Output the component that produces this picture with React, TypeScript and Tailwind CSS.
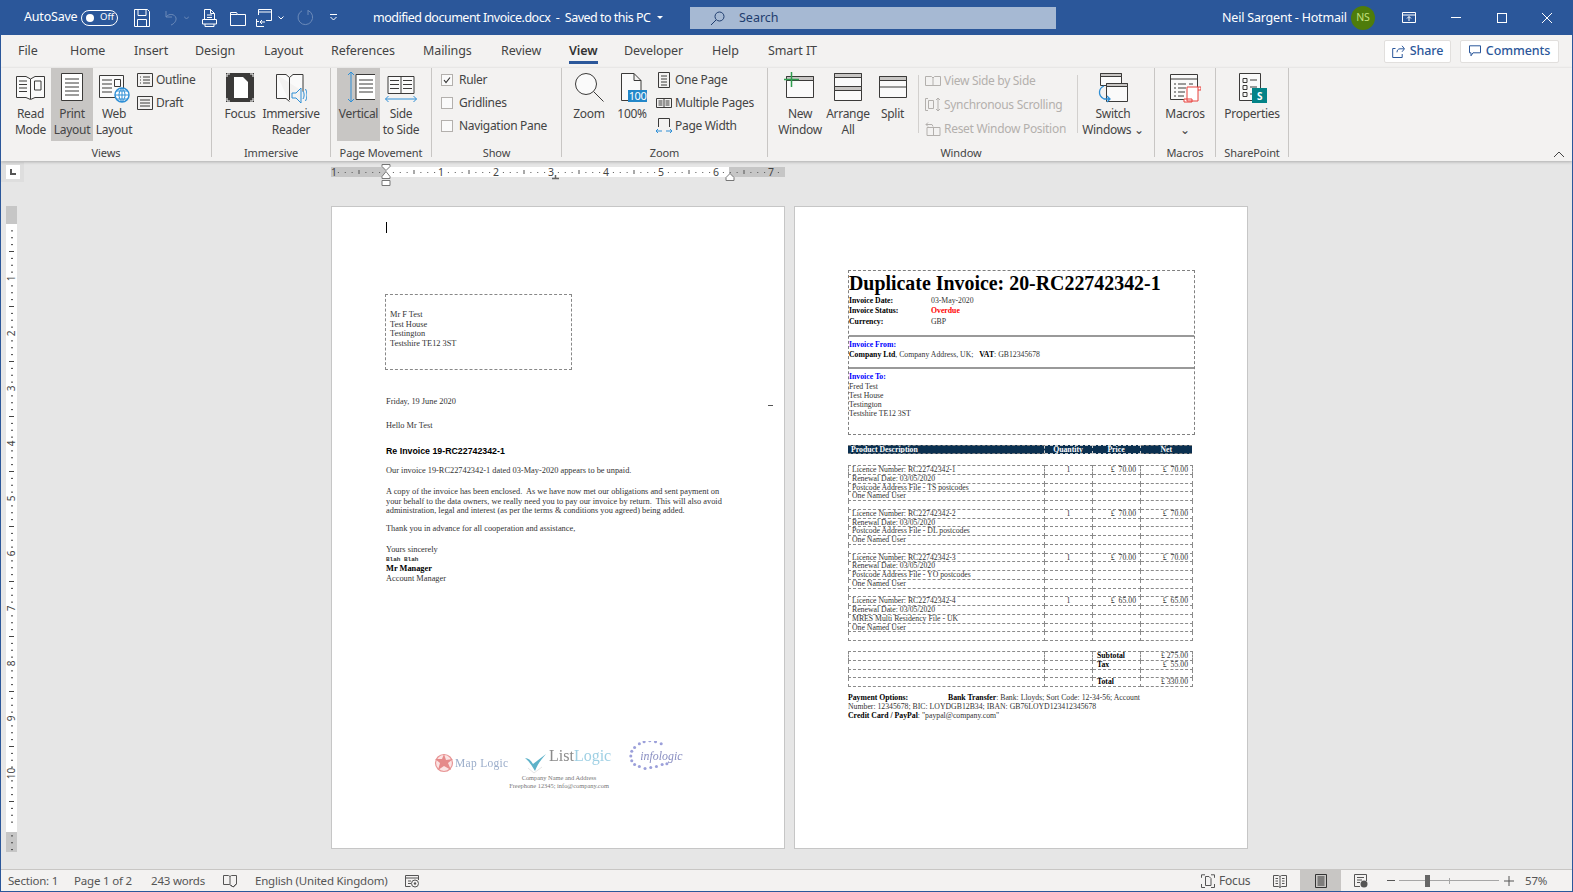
import type { ReactNode } from "react";

const UI_FONT = "font-['Noto_Sans',sans-serif]";
const DOC_FONT = "font-['Liberation_Serif',serif]";

const Ico = ({ children }: { children: ReactNode }) => (
  <svg viewBox="0 0 32 32" className="h-8 w-8" fill="none" stroke="#3b3a39" strokeWidth="1">
    {children}
  </svg>
);

const Small = ({ children, w = 16, h = 16 }: { children: ReactNode; w?: number; h?: number }) => (
  <svg viewBox={`0 0 ${w} ${h}`} width={w} height={h} className="shrink-0" fill="none" stroke="#3b3a39" strokeWidth="1">
    {children}
  </svg>
);

const BLUE = "#2e8fd6";

function BigButton({
  width,
  icon,
  lines,
  active,
}: {
  width: string;
  icon: ReactNode;
  lines: string[];
  active?: boolean;
}) {
  return (
    <div className={`flex h-[73px] shrink-0 flex-col items-center pt-[4px] ${width} ${active ? "bg-[#c8c6c4]" : ""}`}>
      <div className="h-8">{icon}</div>
      <div className="mt-[2px] flex flex-col items-center text-[12px] leading-[16px] tracking-[-0.3px] whitespace-nowrap text-[#444]">
        {lines.map((l) => (
          <span key={l}>{l}</span>
        ))}
      </div>
    </div>
  );
}

function Group({ width, label, children }: { width: string; label: string; children: ReactNode }) {
  return (
    <div className={`flex h-[89px] shrink-0 flex-col border-r border-[#c8c6c4] ${width}`}>
      <div className="flex h-[79px] items-start">{children}</div>
      <div className="h-[10px] text-center text-[11px] leading-[12px] tracking-[-0.1px] whitespace-nowrap text-[#444]">{label}</div>
    </div>
  );
}

function SmallRow({ icon, text, disabled }: { icon: ReactNode; text: string; disabled?: boolean }) {
  return (
    <div className={`flex items-center gap-[3px] text-[12px] tracking-[-0.3px] whitespace-nowrap ${disabled ? "h-[24px] text-[#b3b0ad]" : "h-[23px] text-[#444]"}`}>
      {icon}
      <span>{text}</span>
    </div>
  );
}

function Check({ text, on }: { text: string; on?: boolean }) {
  return (
    <div className="flex h-[23px] items-center text-[12px] tracking-[-0.3px] whitespace-nowrap text-[#444]">
      <span className="mr-[6px] flex h-[12px] w-[12px] items-center justify-center border border-[#b3b0ad] bg-[#fafafa]">
        {on && (
          <svg viewBox="0 0 10 10" className="h-[10px] w-[10px]" fill="none" stroke="#333" strokeWidth="1.2">
            <path d="M2 5l2 2.5L8 2.5" />
          </svg>
        )}
      </span>
      {text}
    </div>
  );
}

function TitleBar() {
  return (
    <div className={`flex h-[35px] shrink-0 items-center bg-[#2b579a] text-white ${UI_FONT}`}>
      <span className="ml-[23px] w-[57px] text-[12.5px] tracking-[-0.2px]">AutoSave</span>
      <span className="flex h-[16px] w-[37px] items-center rounded-full border border-white pl-[4px] text-[9.5px]">
        <span className="h-[8px] w-[8px] rounded-full bg-white" />
        <span className="ml-[6px]">Off</span>
      </span>
      <span className="ml-[16px] flex">
        <Small w={16} h={18}>
          <path stroke="#fff" d="M.5.5h13l2 2v15H.5zM4 .5v6h8v-6M3.5 17.5v-7h9v7" />
        </Small>
      </span>
      <span className="ml-[14px] flex opacity-30">
        <Small w={13} h={18}>
          <path stroke="#fff" d="M2 2v6h6M2 8c3-4 9-3 10 1 .5 3-2 6-5 7" />
        </Small>
      </span>
      <span className="ml-[7px] flex opacity-30">
        <Small w={5} h={4}>
          <path stroke="#fff" d="M0 .5l2.5 2.5L5 .5" />
        </Small>
      </span>
      <span className="ml-[13px] flex">
        <Small w={15} h={18}>
          <path stroke="#fff" d="M2.500 10V.5h6l4 4V10M8.500.5v4h4M5 6h5M5 8.500h5M.5 10.500h14v4.500h-14zM3 15v2.500h9V15" />
        </Small>
      </span>
      <span className="ml-[13px] flex">
        <Small w={16} h={16}>
          <path stroke="#fff" d="M.5 2.500h6l1 2h8v11H.5zM.5 4.500h7" />
        </Small>
      </span>
      <span className="ml-[10px] flex">
        <Small w={16} h={18}>
          <path stroke="#fff" d="M2.500 6V.5h13v11H10M2.500 3h13M.5 10v7.500H8M3 12.500H.5M9 13H4l2-2M4 13l2 2" />
        </Small>
      </span>
      <span className="ml-[6px] flex">
        <Small w={6} h={4}>
          <path stroke="#fff" d="M.5.5L3 3 5.500.5" />
        </Small>
      </span>
      <span className="ml-[13px] flex opacity-30">
        <Small w={16} h={17}>
          <path stroke="#fff" d="M11 1.500a7.300 7.300 0 1 1-6 .3M11 1v5" />
        </Small>
      </span>
      <span className="ml-[17px] flex">
        <Small w={7} h={7}>
          <path stroke="#fff" d="M0 .5h7M.5 3l3 3 3-3" />
        </Small>
      </span>
      <span className="mt-[1px] ml-[36px] w-[277px] text-[12.5px] tracking-[-0.5px] whitespace-nowrap">
        modified document Invoice.docx&nbsp;&nbsp;-&nbsp;&nbsp;Saved to this PC
      </span>
      <span className="ml-[7px] h-0 w-0 border-x-[3.5px] border-t-[3.5px] border-x-transparent border-t-white" />
      <div className="mt-[1px] ml-[27px] flex h-[22px] w-[366px] items-center bg-[#a6b9d3] pl-[20px] text-[12.5px] text-[#1f3d6e]">
        <svg viewBox="0 0 15 15" className="h-[15px] w-[15px]" fill="none" stroke="#1f3d6e" strokeWidth="1">
          <circle cx="9.500" cy="5.500" r="4.500" />
          <path d="M6 9l-5 5" />
        </svg>
        <span className="ml-[14px]">Search</span>
      </div>
      <span className="mt-[2px] ml-[166px] w-[118px] text-[12.5px] tracking-[-0.2px] whitespace-nowrap">Neil Sargent - Hotmail</span>
      <span className="ml-[11px] flex h-[24px] w-[24px] items-center justify-center rounded-full bg-[#4e7c0b] text-[10.5px] text-[#c5e07e]">NS</span>
      <span className="ml-[27px] flex">
        <Small w={14} h={11}>
          <path stroke="#fff" d="M.5.5h13v10H.5zM.5 3h13M7 9V4.500M5 6.500l2-2 2 2" />
        </Small>
      </span>
      <span className="ml-[35px] h-px w-[10px] bg-white" />
      <span className="ml-[36px] h-[10px] w-[10px] border border-white" />
      <span className="ml-[35px] flex">
        <Small w={10} h={10}>
          <path stroke="#fff" d="M0 0l10 10M10 0L0 10" />
        </Small>
      </span>
    </div>
  );
}

function Tabs() {
  return (
    <div className={`flex h-[33px] shrink-0 items-center bg-[#f3f2f1] pl-[17px] text-[12.5px] tracking-[-0.1px] text-[#444] ${UI_FONT}`}>
      <span className="w-[52px]">File</span>
      <span className="w-[64px]">Home</span>
      <span className="w-[61px]">Insert</span>
      <span className="w-[69px]">Design</span>
      <span className="w-[67px]">Layout</span>
      <span className="w-[92px]">References</span>
      <span className="w-[78px]">Mailings</span>
      <span className="w-[68px]">Review</span>
      <span className="relative w-[55px] font-semibold text-[#333]">
        View
        <span className="absolute top-[19px] left-0 h-[3px] w-[29px] bg-[#2b579a]" />
      </span>
      <span className="w-[88px]">Developer</span>
      <span className="w-[56px]">Help</span>
      <span>Smart IT</span>
      <div className="mr-[13px] ml-auto flex gap-[9px] text-[12.5px] font-medium text-[#2b579a]">
        <div className="flex h-[23px] w-[67px] items-center justify-center gap-[5px] rounded-[2px] border border-[#e1dfdd] bg-white pb-[1px]">
          <Small w={13} h={13}>
            <path stroke="#2b579a" d="M10 .8l2.500 3-2.500 3M12 3.800H8c-2 0-3 1.500-3 3.500M3.500 3.500H.7v9h9.500V9" />
          </Small>
          Share
        </div>
        <div className="flex h-[23px] w-[99px] items-center justify-center gap-[5px] rounded-[2px] border border-[#e1dfdd] bg-white pb-[1px]">
          <Small w={12} h={12}>
            <path stroke="#2b579a" d="M.5.800h11v7H4l-2 3v-3H.5z" />
          </Small>
          Comments
        </div>
      </div>
    </div>
  );
}

function Ribbon() {
  return (
    <div className={`relative z-10 flex h-[93px] shrink-0 bg-[#f3f2f1] shadow-[0_1px_3px_rgba(0,0,0,0.25)] ${UI_FONT}`}>
      <Group width="w-[211px]" label="Views">
        <div className="flex pl-[9px]">
          <BigButton
            width="w-[41px]"
            lines={["Read", "Mode"]}
            icon={
              <Ico>
                <path fill="#fafafa" d="M1.500 4.500H11l4.500 2.500 4.500-2.500h9.500v21H20l-4.500 2-4.500-2H1.500z" />
                <path d="M15.500 7v20M4 9h8M4 12.500h8M4 16h8M4 19.500h8M19.500 9h6.500v9h-6.500z" />
              </Ico>
            }
          />
          <BigButton
            width="w-[42px]"
            active
            lines={["Print", "Layout"]}
            icon={
              <Ico>
                <path fill="#fff" d="M5.500 1.500h21v27h-21z" />
                <path d="M9 7h14M9 11h14M9 15h14M9 19h14M9 23h14" />
              </Ico>
            }
          />
          <BigButton
            width="w-[42px]"
            lines={["Web", "Layout"]}
            icon={
              <Ico>
                <path fill="#fafafa" d="M1.500 3.500h24v22h-24z" />
                <path d="M4 8h10M4 12h10M4 16h10M4 20h10M16.500 7.500h6v7h-6z" />
                <circle cx="24" cy="23" r="7" fill="#fff" stroke={BLUE} strokeWidth="1.500" />
                <path stroke={BLUE} d="M17 23h14M24 16v14M19 19h10M19 27h10M24 16c-4 4-4 10 0 14M24 16c4 4 4 10 0 14" />
              </Ico>
            }
          />
        </div>
        <div className="ml-[2px] flex flex-col">
          <SmallRow
            text="Outline"
            icon={
              <Small>
                <path d="M.5 1.500h15v13H.5zM3 5h1M6 5h7M3 8h1M6 8h7M3 11h1M6 11h7" />
              </Small>
            }
          />
          <SmallRow
            text="Draft"
            icon={
              <Small>
                <path d="M.5 1.500h15v13H.5zM3 5h10M3 8h10M3 11h10" />
              </Small>
            }
          />
        </div>
      </Group>

      <Group width="w-[119px]" label="Immersive">
        <div className="flex pl-[4px]">
          <BigButton
            width="w-[48px]"
            lines={["Focus"]}
            icon={
              <Ico>
                <rect x="2" y="1" width="28" height="29" fill="#3b3a39" stroke="none" />
                <path fill="#fff" stroke="none" d="M10 5h9l5 5v16H10z" />
                <path stroke="#fff" d="M3 5V2h3M26 2h3v3M3 26v3h3M29 26v3h-3" />
              </Ico>
            }
          />
          <BigButton
            width="w-[54px]"
            lines={["Immersive", "Reader"]}
            icon={
              <Ico>
                <path fill="#fafafa" d="M1.500 2.500H11l3.500 3 3.500-3h10v17M1.500 2.500v24H11l3.500 3" />
                <path d="M14.500 5.500V28" />
                <path stroke={BLUE} d="M17 21h4l5-5v15l-5-5h-4zM28 19c1.500 2 1.500 6 0 8M30.500 17c2 3 2 9 0 12" />
              </Ico>
            }
          />
        </div>
      </Group>

      <Group width="w-[101px]" label="Page Movement">
        <div className="flex pl-[6px]">
          <BigButton
            width="w-[43px]"
            active
            lines={["Vertical"]}
            icon={
              <Ico>
                <path stroke={BLUE} d="M8 0v30M5 3l3-3 3 3M5 27l3 3 3-3" />
                <path fill="#fff" d="M14.500 2.500h21v25h-21z" transform="translate(-1.500 0)" />
                <path d="M16 8h14M16 12h14M16 16h14M16 20h14" />
              </Ico>
            }
          />
          <BigButton
            width="w-[42px]"
            lines={["Side", "to Side"]}
            icon={
              <Ico>
                <path fill="#fafafa" d="M3 4.500h26v17H3z" />
                <path d="M16 4.500v17M5 8.500h9M5 12.500h9M5 16.500h9M18 8.500h9M18 12.500h9M18 16.500h9" />
                <path stroke={BLUE} d="M.5 27h31M3.500 24l-3 3 3 3M28.500 24l3 3-3 3" />
              </Ico>
            }
          />
        </div>
      </Group>

      <Group width="w-[130px]" label="Show">
        <div className="flex flex-col pl-[9px]">
          <Check text="Ruler" on />
          <Check text="Gridlines" />
          <Check text="Navigation Pane" />
        </div>
      </Group>

      <Group width="w-[206px]" label="Zoom">
        <div className="flex pl-[2px]">
          <BigButton
            width="w-[50px]"
            lines={["Zoom"]}
            icon={
              <Ico>
                <circle cx="13" cy="12" r="10.500" fill="#fafafa" />
                <path d="M20.500 19.500l10 10" />
              </Ico>
            }
          />
          <div className="flex h-[73px] w-[36px] shrink-0 flex-col items-center pt-[4px] text-[12px] leading-[16px] tracking-[-0.3px] text-[#444]">
            <div className="relative h-8 w-8">
              <Ico>
                <path fill="#fafafa" d="M5.500 1.500H18l7 7v20H5.500zM18 1.500v7h7" />
              </Ico>
              <span className="absolute top-[18px] left-[12px] flex h-[12px] w-[19px] items-center justify-center bg-[#2387c9] text-[11px] tracking-[-0.5px] text-white">100</span>
            </div>
            <span className="mt-[2px]">100%</span>
          </div>
        </div>
        <div className="ml-[6px] flex flex-col">
          <SmallRow
            text="One Page"
            icon={
              <Small>
                <path d="M2.500.5h11v15h-11zM5 4h6M5 7h6M5 10h6M5 13h6" />
              </Small>
            }
          />
          <SmallRow
            text="Multiple Pages"
            icon={
              <Small>
                <path d="M.5 3.500h15v9H.5zM8 3.500v9M2.500 6h4M2.500 8h4M2.500 10h4M9.500 6h4M9.500 8h4M9.500 10h4" />
              </Small>
            }
          />
          <SmallRow
            text="Page Width"
            icon={
              <Small>
                <path d="M2.500 9V.5h11V9" />
                <path stroke={BLUE} d="M0 13h6M2 11l-2 2 2 2M10 13h6M14 11l2 2-2 2" />
              </Small>
            }
          />
        </div>
      </Group>

      <Group width="w-[387px]" label="Window">
        <div className="flex pl-[4px]">
          <BigButton
            width="w-[56px]"
            lines={["New", "Window"]}
            icon={
              <Ico>
                <path fill="#fafafa" d="M2.500 4.500h27v21h-27z" />
                <path fill="#c8c6c4" d="M2.500 4.500h27v4h-27z" />
                <path stroke="#2f9e4f" strokeWidth="1.500" d="M7.500 0v15M0 7.500h15" />
              </Ico>
            }
          />
          <BigButton
            width="w-[40px]"
            lines={["Arrange", "All"]}
            icon={
              <Ico>
                <path fill="#fafafa" d="M2.500 1.500h27v27h-27z" />
                <path fill="#c8c6c4" d="M2.500 1.500h27v4h-27zM2.500 14.500h27v4h-27z" />
              </Ico>
            }
          />
          <BigButton
            width="w-[49px]"
            lines={["Split"]}
            icon={
              <Ico>
                <path fill="#fafafa" d="M2.500 4.500h27v21h-27z" />
                <path fill="#c8c6c4" d="M2.500 4.500h27v4h-27z" />
                <path d="M2.500 15h27" />
              </Ico>
            }
          />
        </div>
        <div className="mt-[7px] ml-[1px] h-[58px] border-l border-[#d2d0ce]" />
        <div className="mt-[1px] ml-[6px] flex w-[152px] flex-col">
          <SmallRow
            disabled
            text="View Side by Side"
            icon={
              <Small>
                <path stroke="#b3b0ad" d="M.5 3.500h6l1.500 1.500 1.500-1.500h6v9h-15zM8 5v7.500" />
              </Small>
            }
          />
          <SmallRow
            disabled
            text="Synchronous Scrolling"
            icon={
              <Small>
                <path stroke="#b3b0ad" d="M3 1.500H.5v12H3M3.500 3.500h5v8h-5zM13 1v13M11 3l2-2 2 2M11 12l2 2 2-2" />
              </Small>
            }
          />
          <SmallRow
            disabled
            text="Reset Window Position"
            icon={
              <Small>
                <path stroke="#b3b0ad" d="M2 6.500h13v8H2zM8.500 6.500v8M1 3.500h6l1 2M3 1.500l-2 2 2 2" />
              </Small>
            }
          />
        </div>
        <div className="mt-[7px] h-[58px] border-l border-[#d2d0ce]" />
        <div className="ml-0 flex h-[73px] w-[70px] shrink-0 flex-col items-center pt-[4px] text-[12px] leading-[16px] tracking-[-0.3px] whitespace-nowrap text-[#444]">
          <Ico>
            <path fill="#fafafa" d="M3.500 1.500h21v12h-21z" />
            <path fill="#c8c6c4" d="M3.500 1.500h21v3h-21z" />
            <path fill="#fafafa" d="M9.500 11.500h21v18h-21z" />
            <path fill="#c8c6c4" d="M9.500 11.500h21v3h-21z" />
            <path stroke={BLUE} fill="none" strokeWidth="1.300" d="M7 14c-5 2-7 9 0 13h6M10 24l3 3-3 3" />
          </Ico>
          <span className="mt-[2px]">Switch</span>
          <span>Windows ⌄</span>
        </div>
      </Group>

      <Group width="w-[61px]" label="Macros">
        <div className="flex h-[73px] w-[60px] flex-col items-center pt-[4px] text-[12px] leading-[16px] tracking-[-0.3px] text-[#444]">
          <Ico>
            <path fill="#fafafa" d="M1.500 2.500h27v25h-27z" />
            <path d="M1.500 7h27M5 12h2M9 12h8M20 12h4M5 16h2M9 16h8M5 20h2M9 20h7M5 24h2M9 24h6" />
            <path stroke="#e8413d" fill="#fff" d="M18 15h11v14H18zM29 15h3v3h-3M15 27h8v3h-8z" />
          </Ico>
          <span className="mt-[2px]">Macros</span>
          <span>⌄</span>
        </div>
      </Group>

      <Group width="w-[73px]" label="SharePoint">
        <div className="flex h-[73px] w-[72px] flex-col items-center pt-[4px] text-[12px] leading-[16px] tracking-[-0.3px] text-[#444]">
          <div className="relative h-8 w-8">
            <Ico>
              <path fill="#fafafa" d="M3.500 1.500h21v27h-21z" />
              <path d="M7 6.500h4v4H7zM14 8h7M7 13.500h4v4H7zM14 15h7M7 20.500h4v4H7zM14 22h2" />
            </Ico>
            <span className="absolute top-[16px] left-[16px] flex h-[15px] w-[15px] items-center justify-center bg-[#038387] text-[10px] font-bold text-white">S</span>
          </div>
          <span className="mt-[2px]">Properties</span>
        </div>
      </Group>

      <svg viewBox="0 0 12 7" className="absolute top-[83px] left-[1552px] h-[7px] w-[12px]" fill="none" stroke="#444">
        <path d="M1 6l5-5 5 5" />
      </svg>
    </div>
  );
}

const H_TICKS = Array.from({ length: 66 }, (_, i) => i - 8).filter((i) => i % 8 !== 0);

function HorizontalRuler() {
  return (
    <svg width="454" height="24" viewBox="0 0 454 24" className={`mt-[2px] ml-[307px] shrink-0 overflow-visible ${UI_FONT}`}>
      <rect x="0" y="4" width="454" height="10" fill="#c6c6c6" />
      <rect x="55" y="4" width="343" height="10" fill="#fff" />
      {H_TICKS.map((i) => {
        const x = 55 + i * 6.875;
        if (x < 4 || x > 452) return null;
        return i % 4 === 0 ? (
          <rect key={i} x={x} y="7" width="1" height="4" fill="#555" />
        ) : (
          <rect key={i} x={x} y="9" width="1" height="1" fill="#555" />
        );
      })}
      <text x="0" y="12.500" fontSize="10.500" fill="#444">
        1
      </text>
      {[1, 2, 3, 4, 5, 6, 7].map((n) => (
        <text key={n} x={55 + n * 55} y="12.500" fontSize="10.500" fill="#444" textAnchor="middle">
          {n}
        </text>
      ))}
      <path d="M51 1.500h8v2l-4 4-4-4zM51 13.500l4-5 4 5v2h-8z" fill="#fff" stroke="#777" />
      <path d="M51 17.500h8v5h-8z" fill="#fff" stroke="#777" />
      <path d="M228 14.500h-7M224.500 11v4" stroke="#666" fill="none" strokeWidth="1.500" transform="translate(0 1)" />
      <path d="M395 17.500v-3l4-4 4 4v3z" fill="#fff" stroke="#777" />
    </svg>
  );
}

function VerticalRuler() {
  const ticks = Array.from({ length: 92 }, (_, i) => i).filter((i) => i % 8 !== 0);
  return (
    <svg width="11" height="646" viewBox="0 0 11 646" className={`ml-[5px] shrink-0 overflow-visible ${UI_FONT}`}>
      <rect width="11" height="646" fill="#fff" />
      <rect width="11" height="18" fill="#c6c6c6" />
      <rect y="626" width="11" height="20" fill="#c6c6c6" />
      {ticks.map((i) => {
        const y = 17.500 + i * 6.875;
        return i % 4 === 0 ? (
          <rect key={i} x="3" y={y} width="5" height="1" fill="#444" />
        ) : (
          <rect key={i} x="5" y={y} width="2" height="1" fill="#444" />
        );
      })}
      {[1, 2, 3, 4, 5, 6, 7, 8, 9, 10].map((n) => (
        <text key={n} x="0" y="0" fontSize="10" fill="#444" textAnchor="middle" transform={`translate(9 ${17.5 + n * 55}) rotate(-90)`}>
          {n}
        </text>
      ))}
    </svg>
  );
}

function Logos() {
  return (
    <svg width="260" height="44" viewBox="0 0 260 44" className={`ml-[100px] blur-[0.5px] ${DOC_FONT}`}>
      <g transform="translate(2 0)">
        <circle cx="10" cy="22" r="8.500" fill="#fbe3e3" stroke="#e89595" strokeWidth="1.200" />
        <path d="M10 13l2 6 7-1-5 4 3 7-7-4-6 4 2-7-5-4 7 0z" fill="#e58a8a" />
        <text x="21" y="26" fontSize="11.500" fill="#9badca" letterSpacing="0.3">
          Map Logic
        </text>
      </g>
      <g transform="translate(93 0)">
        <path d="M0 17c3 0 6 2 8 6l13-10c-4 5-8 9-11 17-3-5-6-10-10-13z" fill="#5db2c9" />
        <path d="M3 27l6 5 8-6" fill="none" stroke="#e5e5e5" />
        <text x="24" y="20" fontSize="16" fill="#8b8b8b">
          List
          <tspan fill="#9fd0e4">Logic</tspan>
        </text>
      </g>
      <g transform="translate(195 -3) scale(0.95)" fill="#8b8fd4">
        {[
          [18, 3], [24, 2], [30, 3], [13, 5], [8, 9], [5, 13], [4, 18], [5, 23], [8, 27], [13, 29],
          [19, 31], [25, 30], [31, 29], [37, 27], [42, 26], [36, 5],
        ].map(([cx, cy]) => (
          <circle key={`${cx}-${cy}`} cx={cx} cy={cy + 1} r="1.600" opacity="0.85" />
        ))}
        <text x="14" y="23" fontSize="12.500" fontStyle="italic" fill="#8a8fc2">
          infologic
        </text>
      </g>
    </svg>
  );
}

function PageOne() {
  return (
    <div className={`relative flex h-[643px] w-[454px] shrink-0 flex-col border border-[#c6c6c6] bg-white pl-[54px] text-[8.350px] leading-[9.500px] text-[#333] ${DOC_FONT}`}>
      <span className="mt-[15px] h-[11px] w-px bg-black" />
      <div className="mt-[61px] -ml-px h-[76px] w-[187px] border border-dashed border-[#888] pt-[15px] pl-[4px]">
        <div>Mr F Test</div>
        <div>Test House</div>
        <div>Testington</div>
        <div>Testshire TE12 3ST</div>
      </div>
      <div className="mt-[27px]">Friday, 19 June 2020</div>
      <div className="mt-[14px]">Hello Mr Test</div>
      <div className="mt-[17px] font-['Liberation_Sans',sans-serif] text-[8.800px] font-bold text-black">Re Invoice 19-RC22742342-1</div>
      <div className="mt-[9px]">Our invoice 19-RC22742342-1 dated 03-May-2020 appears to be unpaid.</div>
      <div className="mt-[12px] whitespace-pre">
        <div>A copy of the invoice has been enclosed.  As we have now met our obligations and sent payment on</div>
        <div>your behalf to the data owners, we really need you to pay our invoice by return.  This will also avoid</div>
        <div>administration, legal and interest (as per the terms &amp; conditions you agreed) being added.</div>
      </div>
      <div className="mt-[8px]">Thank you in advance for all cooperation and assistance,</div>
      <div className="mt-[12px]">Yours sincerely</div>
      <div className="font-['Liberation_Mono',monospace] text-[6px] font-bold">Blah Blah</div>
      <div className="font-bold text-black">Mr Manager</div>
      <div>Account Manager</div>
      <div className="mt-auto mb-[59px] -ml-[54px]">
        <Logos />
        <div className="-mt-[11px] ml-[54px] text-center text-[6.400px] leading-[7.500px] text-[#777]">
          <div className="w-[346px]">Company Name and Address</div>
          <div className="w-[346px]">Freephone 12345; info@company.com</div>
        </div>
      </div>
      <span className="absolute top-[198px] left-[436px] h-px w-[5px] bg-[#555]" />
    </div>
  );
}

type Row = [string, string, string, string];

function licence(n: number, file: string, price: string): Row[] {
  return [
    [`Licence Number: RC22742342-${n}`, "1", price, price],
    ["Renewal Date: 03/05/2020", "", "", ""],
    [file, "", "", ""],
    ["One Named User", "", "", ""],
    ["", "", "", ""],
  ];
}

const ROWS: Row[] = [
  ...licence(1, "Postcode Address File - TS postcodes", "£  70.00"),
  ...licence(2, "Postcode Address File - DL postcodes", "£  70.00"),
  ...licence(3, "Postcode Address File - YO postcodes", "£  70.00"),
  ...licence(4, "MRES Multi Residency File - UK", "£  65.00"),
];

const CELL = "h-[8.750px] overflow-hidden border border-dashed border-[#8a8a8a] p-0 align-top whitespace-pre";

function Cols() {
  return (
    <colgroup>
      <col className="w-[196px]" />
      <col className="w-[48px]" />
      <col className="w-[48px]" />
      <col className="w-[52px]" />
    </colgroup>
  );
}

function PageTwo() {
  return (
    <div className={`flex h-[643px] w-[454px] shrink-0 flex-col border border-[#c6c6c6] bg-white pt-[63px] pl-[53px] text-[7.750px] leading-[9px] text-[#333] ${DOC_FONT}`}>
      <div className="h-[165px] w-[347px] border border-dashed border-[#808080]">
        <div className="h-[66px] border-b-2 border-[#999]">
          <div className="h-[24px] text-[19.900px] leading-[24px] font-bold text-black">Duplicate Invoice: 20-RC22742342-1</div>
          <div className="flex h-[10px] items-center">
            <b className="w-[82px] text-black">Invoice Date:</b>
            <span>03-May-2020</span>
          </div>
          <div className="flex h-[11px] items-center">
            <b className="w-[82px] text-black">Invoice Status:</b>
            <b className="text-[#ff0000]">Overdue</b>
          </div>
          <div className="flex h-[10px] items-center">
            <b className="w-[82px] text-black">Currency:</b>
            <span>GBP</span>
          </div>
        </div>
        <div className="h-[32px] border-b-2 border-[#999] pt-[3px]">
          <b className="block h-[10px] text-[#0000ff]">Invoice From:</b>
          <div className="whitespace-pre">
            <b className="text-black">Company Ltd</b>, Company Address, UK;   <b className="text-black">VAT</b>: GB12345678
          </div>
        </div>
        <div className="pt-[3px]">
          <b className="block h-[10px] text-[#0000ff]">Invoice To:</b>
          <div>Fred Test</div>
          <div>Test House</div>
          <div>Testington</div>
          <div>Testshire TE12 3ST</div>
        </div>
      </div>

      <table className="mt-[10px] w-[344px] table-fixed border-collapse bg-[#0b3050] text-white">
        <Cols />
        <tbody>
          <tr className="font-bold">
            <td className="h-[8px] overflow-hidden border-y border-dashed border-[#808080] p-0 pl-[3px] leading-[7px]">Product Description</td>
            <td className="h-[8px] overflow-hidden border-x border-y border-dashed border-[#ccc] p-0 text-center leading-[7px]">Quantity</td>
            <td className="h-[8px] overflow-hidden border-x border-y border-dashed border-[#ccc] p-0 text-center leading-[7px]">Price</td>
            <td className="h-[8px] overflow-hidden border-y border-dashed border-[#808080] p-0 text-center leading-[7px]">Net</td>
          </tr>
        </tbody>
      </table>

      <table className="mt-[11px] w-[344px] table-fixed border-collapse leading-[7px]">
        <Cols />
        <tbody>
          {ROWS.map((r, i) => (
            <tr key={i}>
              <td className={`${CELL} pl-[3px]`}>{r[0]}</td>
              <td className={`${CELL} text-center`}>{r[1]}</td>
              <td className={`${CELL} pr-[4px] text-right`}>{r[2]}</td>
              <td className={`${CELL} pr-[4px] text-right`}>{r[3]}</td>
            </tr>
          ))}
        </tbody>
      </table>

      <table className="mt-[10px] w-[344px] table-fixed border-collapse leading-[7px]">
        <Cols />
        <tbody>
          <tr>
            <td className={CELL} />
            <td className={CELL} />
            <td className={`${CELL} pl-[4px] font-bold text-black`}>Subtotal</td>
            <td className={`${CELL} pr-[4px] text-right`}>£ 275.00</td>
          </tr>
          <tr>
            <td className={CELL} />
            <td className={CELL} />
            <td className={`${CELL} pl-[4px] font-bold text-black`}>Tax</td>
            <td className={`${CELL} pr-[4px] text-right`}>£  55.00</td>
          </tr>
          <tr>
            <td className={CELL} />
            <td className={CELL} />
            <td className={CELL} />
            <td className={CELL} />
          </tr>
          <tr>
            <td className={CELL} />
            <td className={CELL} />
            <td className={`${CELL} pl-[4px] font-bold text-black`}>Total</td>
            <td className={`${CELL} pr-[4px] text-right`}>£ 330.00</td>
          </tr>
        </tbody>
      </table>

      <div className="mt-[6px]">
        <div className="flex">
          <b className="w-[100px] text-black">Payment Options:</b>
          <span>
            <b className="text-black">Bank Transfer</b>: Bank: Lloyds; Sort Code: 12-34-56; Account
          </span>
        </div>
        <div>Number: 12345678; BIC: LOYDGB12B34; IBAN: GB76LOYD123412345678</div>
        <div>
          <b className="text-black">Credit Card / PayPal</b>: "paypal@company.com"
        </div>
      </div>
    </div>
  );
}

function DocArea() {
  return (
    <div className="flex min-h-0 flex-1 flex-col bg-[#e6e6e6]">
      <div className="flex h-[45px] shrink-0 items-start">
        <div className="mt-[1px] flex h-[20px] w-[23px] shrink-0 items-center justify-center bg-[#dedede]">
          <div className="flex h-[14px] w-[14px] items-center justify-center bg-white">
            <span className="h-[6px] w-[6px] border-b-2 border-l-2 border-[#555]" />
          </div>
        </div>
        <HorizontalRuler />
      </div>
      <div className="flex items-start">
        <VerticalRuler />
        <div className="ml-[314px] flex gap-[9px]">
          <PageOne />
          <PageTwo />
        </div>
      </div>
    </div>
  );
}

function StatusBar() {
  return (
    <div className={`flex h-[22px] shrink-0 items-center border-t border-[#c8c6c4] bg-[#f3f2f1] text-[11.5px] tracking-[-0.2px] text-[#555] ${UI_FONT}`}>
      <span className="ml-[7px] w-[66px]">Section: 1</span>
      <span className="w-[77px]">Page 1 of 2</span>
      <span className="w-[72px]">243 words</span>
      <Small w={14} h={14}>
        <path stroke="#555" d="M.5 1.500h5l1.500 1 1.500-1h5V10l-3 3-3-1.500-1-1h-6zM7 2.500V11M8 11l2 2 3-3" />
      </Small>
      <span className="ml-[18px] w-[150px]">English (United Kingdom)</span>
      <Small w={14} h={14}>
        <path stroke="#555" d="M.5 1.500h13V6M.5 1.500v11h5M.5 4h13M3 7h3M3 9.500h3" />
        <circle cx="10" cy="9.500" r="3.500" stroke="#555" />
        <circle cx="10" cy="9.500" r="1.200" fill="#555" stroke="none" />
      </Small>
      <span className="ml-[782px]">
        <Small w={14} h={14}>
          <path stroke="#555" d="M4 .8H.5v3M10 .8h3.500v3M.5 10v3.500H4M13.500 10v3.500H10M4.500 2.500h3.500l2 2v7h-5.500z" />
        </Small>
      </span>
      <span className="ml-[4px] w-[54px] text-[12px]">Focus</span>
      <Small w={14} h={14}>
        <path stroke="#555" d="M.5 1.500h5l1.500 1 1.500-1h5v11h-5L7 13.500l-1.500-1h-5zM7 2.500v11M2.500 4.500h2.500M2.500 7h2.500M2.500 9.500h2.500M9 4.500h2.500M9 7h2.500M9 9.500h2.500" />
      </Small>
      <span className="ml-[13px] flex h-[21px] w-[41px] items-center justify-center bg-[#c8c6c4]">
        <Small w={12} h={14}>
          <path stroke="#333" d="M.5.5h11v13H.5zM2.500 3h7M2.500 5h7M2.500 7h7M2.500 9h7M2.500 11h7" />
        </Small>
      </span>
      <span className="ml-[13px] flex">
        <Small w={14} h={14}>
          <path stroke="#555" d="M.5.5h12V7M.5.5v12H6M3 3.500h7M3 6h5M3 8.500h3" />
          <circle cx="10" cy="10" r="3.500" fill="#555" stroke="none" />
        </Small>
      </span>
      <span className="ml-[19px] h-px w-[8px] bg-[#555]" />
      <div className="relative ml-[4px] flex h-[12px] w-[100px] items-center">
        <span className="h-px w-full bg-[#a6a6a6]" />
        <span className="absolute top-[3px] left-[50px] h-[6px] w-px bg-[#a6a6a6]" />
        <span className="absolute top-0 left-[26px] h-[12px] w-[5px] bg-[#666]" />
      </div>
      <svg viewBox="0 0 10 10" className="ml-[5px] h-[10px] w-[10px]" stroke="#555">
        <path d="M0 5h10M5 0v10" />
      </svg>
      <span className="ml-[11px] text-[11.5px]">57%</span>
    </div>
  );
}

export default function App() {
  return (
    <div className="flex h-[892px] w-[1573px] flex-col overflow-hidden border-x border-b border-[#2b579a] bg-[#e6e6e6]">
      <TitleBar />
      <Tabs />
      <Ribbon />
      <DocArea />
      <StatusBar />
    </div>
  );
}
